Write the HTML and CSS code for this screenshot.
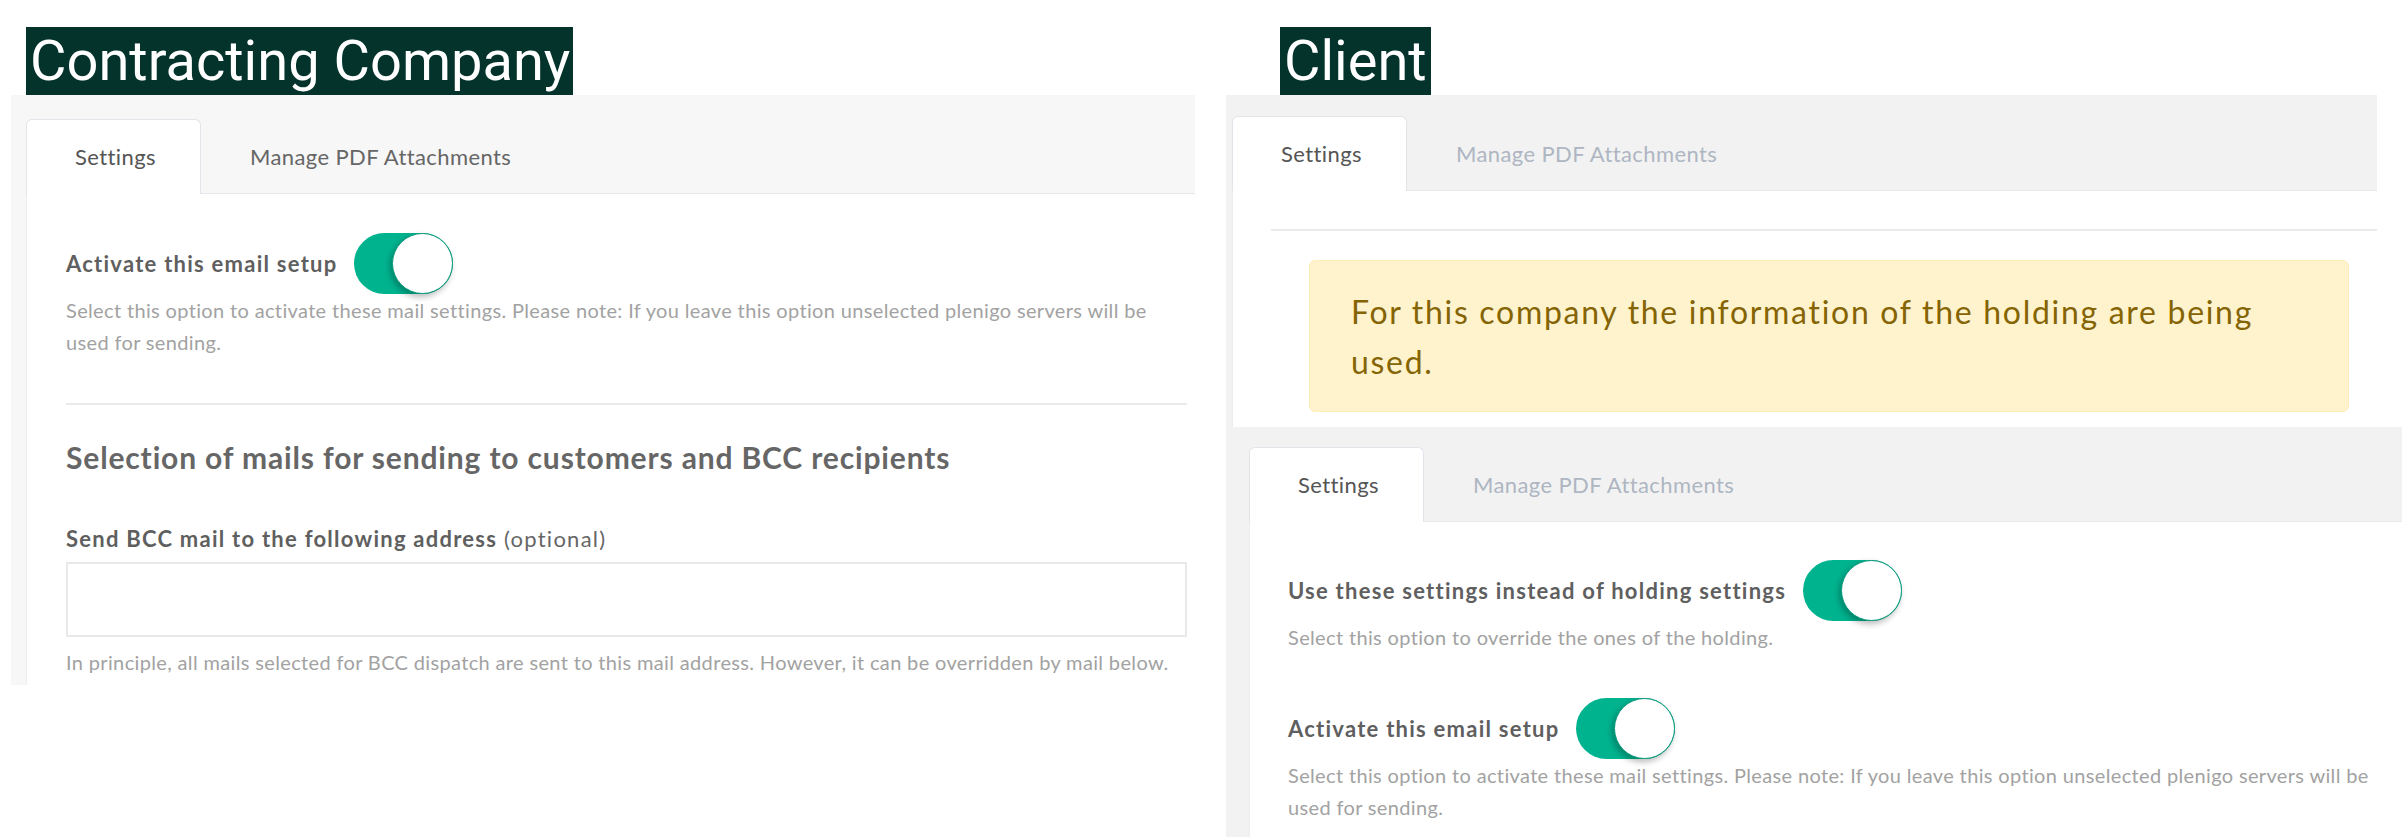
FILE: index.html
```
<!DOCTYPE html>
<html lang="en">
<head>
  <meta charset="UTF-8" />
  <title>Email setup - Contracting Company vs Client</title>
  <link rel="stylesheet" href="styles.css">
</head>
<body>
  <div class="board">

    <!-- left: contracting company -->
    <section class="side side-company">
      <h2 class="caption">Contracting Company</h2>
      <div class="panel">
        <ul class="tabs">
          <li class="tab active">Settings</li>
          <li class="tab">Manage PDF Attachments</li>
        </ul>
        <div class="tab-body">
          <div class="field">
            <div class="switch-row">
              <label class="switch-label">Activate this email setup</label>
              <span class="switch on"></span>
            </div>
            <p class="hint">Select this option to activate these mail settings. Please note: If you leave this option unselected plenigo servers will be used for sending.</p>
          </div>
          <hr class="divider">
          <h3 class="section-title">Selection of mails for sending to customers and BCC recipients</h3>
          <label class="input-label"><b>Send BCC mail to the following address</b> (optional)</label>
          <input class="text-input" type="text">
          <p class="hint hint-input">In principle, all mails selected for BCC dispatch are sent to this mail address. However, it can be overridden by mail below.</p>
        </div>
      </div>
    </section>

    <!-- right: client -->
    <section class="side side-client">
      <h2 class="caption">Client</h2>
      <div class="panel panel-holding">
        <ul class="tabs">
          <li class="tab active">Settings</li>
          <li class="tab muted">Manage PDF Attachments</li>
        </ul>
        <div class="tab-body">
          <hr class="divider">
          <div class="alert">For this company the information of the holding are being used.</div>
        </div>
      </div>
      <div class="panel panel-own">
        <ul class="tabs">
          <li class="tab active">Settings</li>
          <li class="tab muted">Manage PDF Attachments</li>
        </ul>
        <div class="tab-body">
          <div class="field">
            <div class="switch-row">
              <label class="switch-label">Use these settings instead of holding settings</label>
              <span class="switch on"></span>
            </div>
            <p class="hint">Select this option to override the ones of the holding.</p>
          </div>
          <div class="field">
            <div class="switch-row">
              <label class="switch-label">Activate this email setup</label>
              <span class="switch on"></span>
            </div>
            <p class="hint">Select this option to activate these mail settings. Please note: If you leave this option unselected plenigo servers will be used for sending.</p>
          </div>
        </div>
      </div>
    </section>

  </div>
</body>
</html>
```

FILE: styles.css
```
body {
  margin: 0;
  background: #fff;
  font-family: Lato, "Open Sans", sans-serif;
  color: #666;
}

.board {
  display: flex;
  align-items: flex-start;
  min-height: 837px;
}

.side-company {
  flex: 0 0 1184px;
  padding-left: 11px;
}

.side-client {
  flex: 1;
  margin-left: 31px;
}

.caption {
  display: inline-block;
  margin: 27px 0 0 15px;
  padding: 0 3px 0 4px;
  height: 68px;
  line-height: 68px;
  background: #03332b;
  color: #fff;
  font-family: Roboto, "Liberation Sans", sans-serif;
  font-weight: 400;
  font-size: 56px;
  vertical-align: top;
}

.side-client .caption {
  margin-left: 54px;
  padding: 0 4px;
}

/* panels + tabs */
.panel {
  background: #f7f7f7;
  padding: 24px 0 0 15px;
}

.panel-holding,
.panel-own {
  background: #f2f2f2;
}

.panel-holding {
  margin-right: 25px;
  padding: 21px 0 0 6px;
}

.panel-own {
  padding: 20px 0 0 23px;
}

.tabs {
  display: flex;
  margin: 0;
  padding: 0;
  list-style: none;
  border-bottom: 1px solid #e4e7eb;
}

.tab {
  height: 74px;
  line-height: 74px;
  padding: 0 44px 0 48px;
  font-size: 22px;
  letter-spacing: 0.4px;
  color: #666;
  border: 1px solid transparent;
  border-bottom: none;
  margin-bottom: -1px;
}

.tab.active {
  background: #fff;
  color: #555;
  border-color: #e1e4e8;
  border-radius: 6px 6px 0 0;
}

.tab.muted {
  color: #aeb6c2;
}

.tab-body {
  background: #fff;
  border-left: 1px solid #eceef0;
  padding: 39px 8px 7px 39px;
}

.panel-holding .tab-body {
  padding: 38px 0 15px 38px;
}

.panel-own .tab-body {
  padding: 38px 0 20px 38px;
}

/* switches */
.field {
  margin-bottom: 45px;
}

.panel-own .field:last-child {
  margin-bottom: 0;
}

.switch-row {
  display: flex;
  align-items: center;
  gap: 17px;
}

.switch-label {
  font-size: 22px;
  font-weight: 700;
  letter-spacing: 1.25px;
  color: #5f5f5f;
}

.switch {
  position: relative;
  width: 99px;
  height: 61px;
  border-radius: 31px;
  background: #00b38f;
  flex: none;
}

.switch.on::after {
  content: "";
  position: absolute;
  top: 0;
  right: 0;
  width: 59px;
  height: 59px;
  border-radius: 50%;
  background: #fff;
  border: 1px solid #0a9a7b;
  box-shadow: -2px 3px 6px rgba(0, 0, 0, 0.28);
}

.hint {
  margin: 0;
  font-size: 20px;
  font-weight: 400;
  letter-spacing: 0.35px;
  line-height: 32px;
  color: #a2a2a2;
}

.divider {
  margin: 0;
  border: none;
  border-top: 2px solid #e8eaec;
}

.section-title {
  margin: 34px 0 50px;
  font-size: 30px;
  letter-spacing: 0.85px;
  line-height: 36px;
  font-weight: 700;
  color: #666;
}

.input-label {
  display: block;
  font-size: 22px;
  letter-spacing: 1.25px;
  line-height: 28px;
  color: #666;
  margin-bottom: 9px;
}

.input-label b {
  color: #5f5f5f;
}

.text-input {
  display: block;
  box-sizing: border-box;
  width: 100%;
  height: 75px;
  margin: 0;
  border: 2px solid #e9e9e9;
  background: #fff;
}

.hint-input {
  margin-top: 9px;
}

/* client: holding notice */
.panel-holding .divider {
  margin-bottom: 29px;
}

.alert {
  margin: 0 28px 0 38px;
  padding: 26px 70px 24px 41px;
  background: #fff3cd;
  border: 1px solid #ffeeba;
  border-radius: 6px;
  color: #856404;
  font-size: 32px;
  letter-spacing: 1.7px;
  line-height: 50px;
}
```
